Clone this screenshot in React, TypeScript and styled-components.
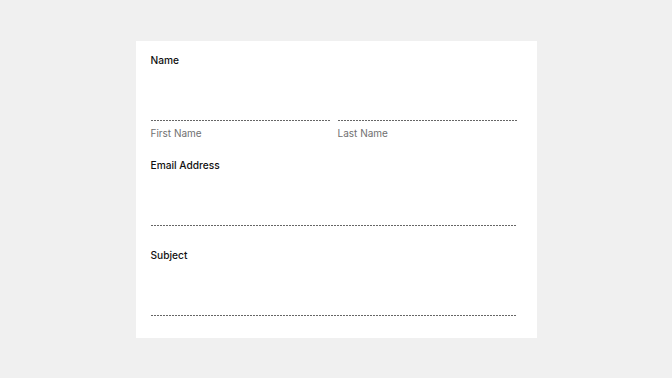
import styled, { createGlobalStyle } from 'styled-components';

const GlobalStyle = createGlobalStyle`
  html, body {
    margin: 0;
    padding: 0;
    background: #f0f0f0;
  }
  body {
    font-family: Inter, 'Liberation Sans', Arial, sans-serif;
  }
`;

const Page = styled.div`
  width: 672px;
  height: 378px;
  display: flex;
  justify-content: center;
  padding-top: 41px;
  box-sizing: border-box;
`;

const Card = styled.form`
  width: 401px;
  height: 297px;
  box-sizing: border-box;
  background: #fff;
  padding: 12px 20px 0 15px;
  display: flex;
  flex-direction: column;
`;

const Field = styled.div<{ $gap: number }>`
  display: flex;
  flex-direction: column;
  margin-bottom: ${({ $gap }) => $gap}px;
`;

const Label = styled.label`
  font-size: 10.2px;
  line-height: 14px;
  font-weight: 500;
  color: #111;
`;

const Row = styled.div`
  display: grid;
  grid-template-columns: 1fr 1fr;
  column-gap: 8px;
`;

const Part = styled.div`
  display: flex;
  flex-direction: column;
`;

// dotted rule drawn as a 3px repeating dash so it reads like the reference
const Input = styled.input`
  all: unset;
  display: block;
  height: 54px;
  width: 100%;
  box-sizing: border-box;
  background: linear-gradient(to right, #666 2px, transparent 2px) left bottom / 3px 1px repeat-x;
  font-family: inherit;
  font-size: 11px;
  color: #111;
`;

const SubLabel = styled.span`
  font-size: 10px;
  line-height: 14px;
  color: #707070;
  margin-top: 5px;
`;

const App = () => (
  <>
    <GlobalStyle />
    <Page>
      <Card>
        <Field $gap={18}>
          <Label>Name</Label>
          <Row>
            <Part>
              <Input aria-label="First Name" />
              <SubLabel>First Name</SubLabel>
            </Part>
            <Part>
              <Input aria-label="Last Name" />
              <SubLabel>Last Name</SubLabel>
            </Part>
          </Row>
        </Field>
        <Field $gap={22}>
          <Label>Email Address</Label>
          <Input type="email" />
        </Field>
        <Field $gap={0}>
          <Label>Subject</Label>
          <Input />
        </Field>
      </Card>
    </Page>
  </>
);

export default App;
